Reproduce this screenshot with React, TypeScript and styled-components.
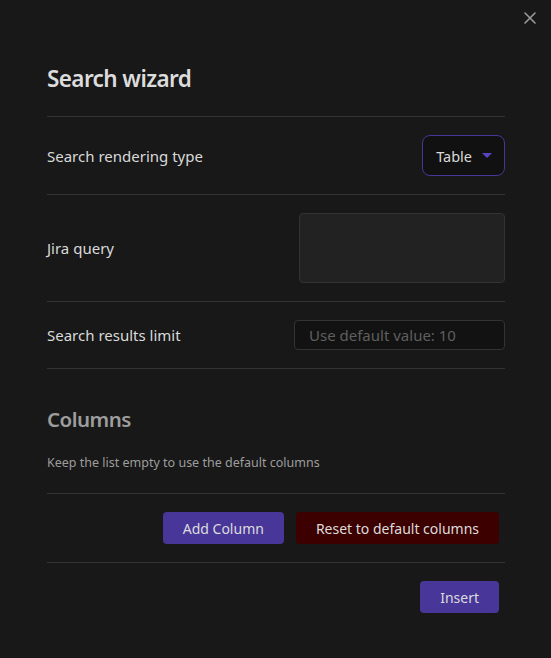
import React from "react";
import styled, { createGlobalStyle } from "styled-components";

const Global = createGlobalStyle`
  html, body { margin: 0; padding: 0; background: #181818; }
  body { font-family: "Noto Sans", "Open Sans", sans-serif; color: #dadada; }
  * { box-sizing: border-box; }
`;

const Modal = styled.div`
  position: relative;
  width: 551px;
  height: 658px;
  background: #181818;
  padding: 64px 46px 0 47px;
`;

const Close = styled.button`
  position: absolute;
  top: 10px;
  right: 13px;
  width: 16px;
  height: 16px;
  padding: 0;
  border: none;
  background: none;
  display: flex;
  align-items: center;
  justify-content: center;
  color: #9a9a9a;
`;

const Title = styled.h1`
  margin: 0 0 22px;
  font-size: 22.5px;
  line-height: 30px;
  font-weight: 600;
  letter-spacing: -0.6px;
  color: #dcdcdc;
`;

const Item = styled.div<{ $justify?: string }>`
  display: flex;
  align-items: center;
  justify-content: ${(p) => p.$justify ?? "space-between"};
  gap: 12px;
  border-top: 1px solid #333;
  padding: 18px 0;
`;

const Label = styled.div`
  font-size: 15px;
  color: #dadada;
`;

const Dropdown = styled.div`
  height: 41px;
  display: flex;
  align-items: center;
  gap: 10px;
  padding: 0 12px 0 13px;
  border: 1px solid #483699;
  border-radius: 8px;
  background: #111;
  font-size: 14.5px;
  color: #dadada;
`;

const TextArea = styled.textarea`
  display: block;
  width: 206px;
  height: 70px;
  margin: 0;
  background: #222;
  border: 1px solid #333;
  border-radius: 4px;
  resize: none;
  outline: none;
`;

const Input = styled.input`
  width: 211px;
  height: 30px;
  background: #121212;
  border: 1px solid #333;
  border-radius: 4px;
  padding: 0 14px;
  font-family: inherit;
  font-size: 15px;
  color: #dadada;
  outline: none;
  &::placeholder { color: #5f5f5f; }
`;

const Section = styled.div`
  border-top: 1px solid #333;
  padding: 36px 0 21px;
`;

const Heading = styled.h2`
  margin: 0 0 21px;
  font-size: 20.5px;
  line-height: 28px;
  font-weight: 600;
  letter-spacing: -0.5px;
  color: #9d9d9d;
`;

const Desc = styled.div`
  font-size: 12.5px;
  line-height: 18px;
  color: #9d9d9d;
`;

const Button = styled.button<{ $danger?: boolean }>`
  height: 32px;
  padding: 0 20px;
  border: none;
  border-radius: 4px;
  background: ${(p) => (p.$danger ? "#3c0000" : "#483699")};
  color: #dcdcdc;
  font-family: inherit;
  font-size: 14px;
`;

const Buttons = styled.div`
  display: flex;
  gap: 12px;
  padding-right: 6px;
`;

export default function App() {
  return (
    <>
      <Global />
      <Modal>
        <Close aria-label="Close">
          <svg width="12" height="12" viewBox="0 0 12 12" fill="none" stroke="currentColor" strokeWidth="1.6" strokeLinecap="round">
            <path d="M1 1L11 11M11 1L1 11" />
          </svg>
        </Close>
        <Title>Search wizard</Title>
        <Item>
          <Label>Search rendering type</Label>
          <Dropdown>
            Table
            <svg width="10" height="5" viewBox="0 0 10 5">
              <path d="M0 0H10L5 5Z" fill="#5b44c4" />
            </svg>
          </Dropdown>
        </Item>
        <Item>
          <Label>Jira query</Label>
          <TextArea />
        </Item>
        <Item>
          <Label>Search results limit</Label>
          <Input placeholder="Use default value: 10" />
        </Item>
        <Section>
          <Heading>Columns</Heading>
          <Desc>Keep the list empty to use the default columns</Desc>
        </Section>
        <Item $justify="flex-end">
          <Buttons>
            <Button>Add Column</Button>
            <Button $danger>Reset to default columns</Button>
          </Buttons>
        </Item>
        <Item $justify="flex-end">
          <Buttons>
            <Button>Insert</Button>
          </Buttons>
        </Item>
      </Modal>
    </>
  );
}
